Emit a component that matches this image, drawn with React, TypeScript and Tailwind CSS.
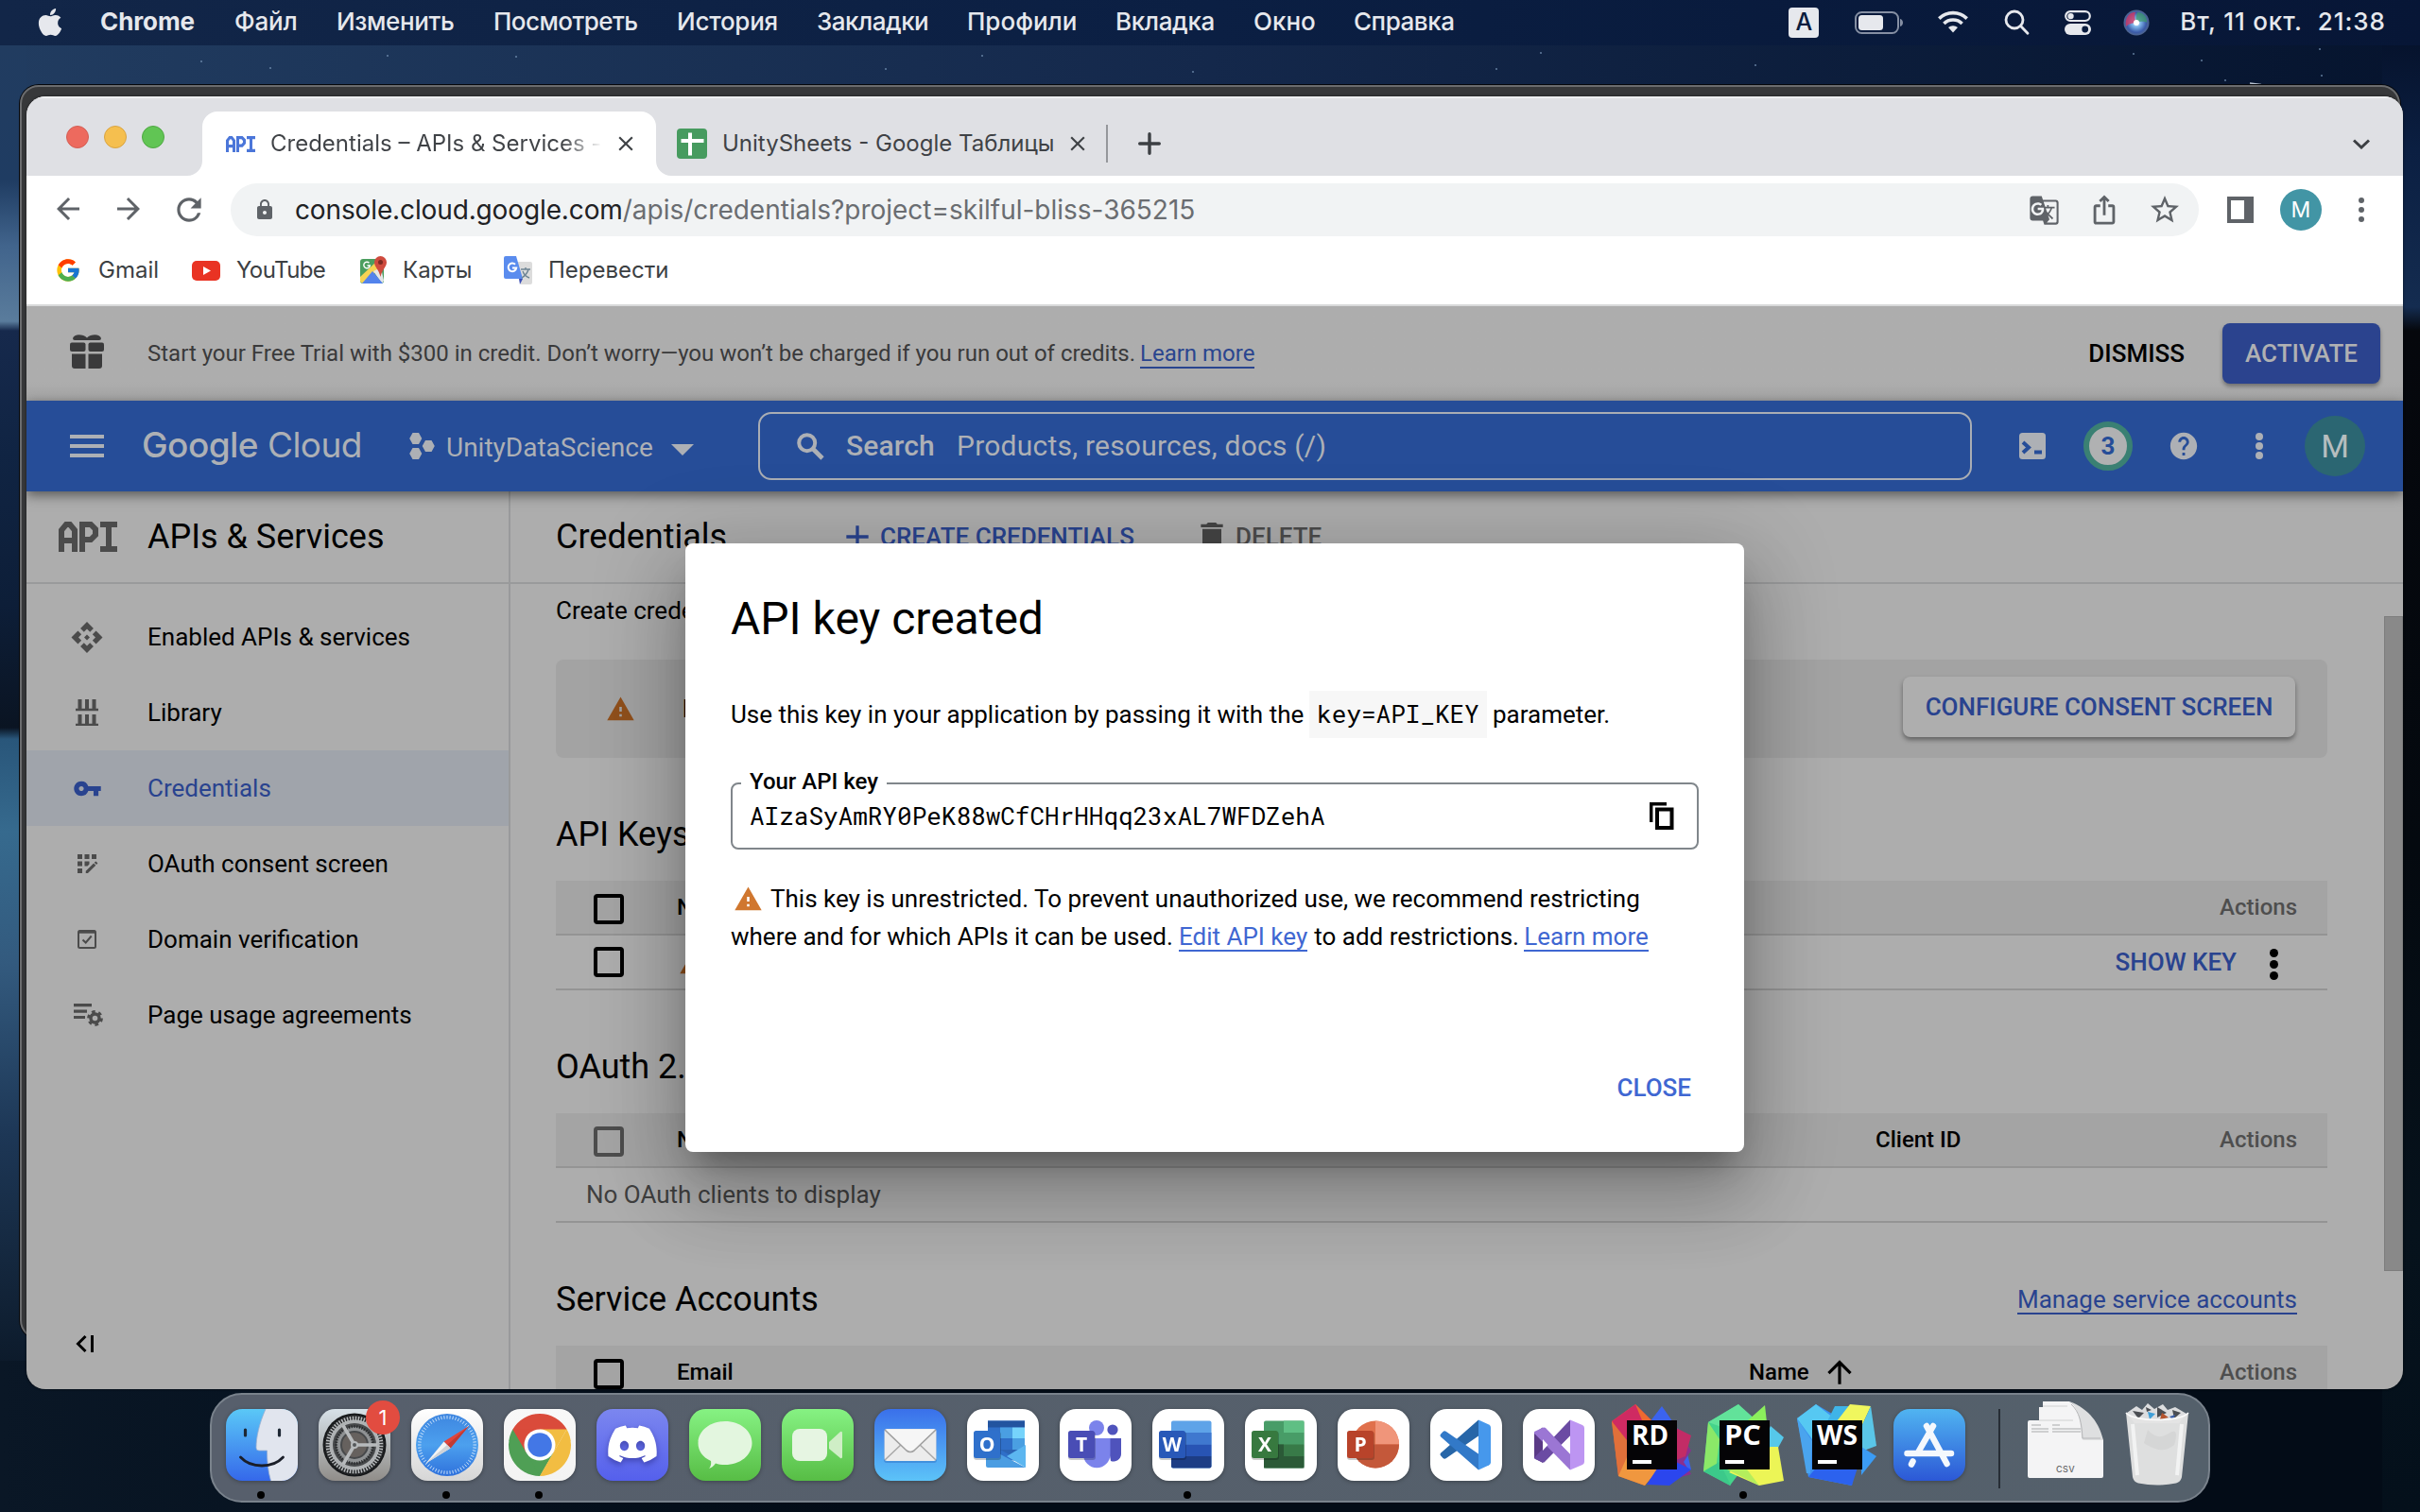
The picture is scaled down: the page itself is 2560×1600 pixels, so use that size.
import React from "react";
import {
  MdMenu, MdHelp, MdDelete, MdAdd, MdVpnKey, MdWarning, MdLock,
  MdArrowBack, MdArrowForward, MdRefresh, MdStarBorder, MdGTranslate, MdIosShare, MdArrowUpward,
  MdClose, MdApi, MdAppRegistration,
} from "react-icons/md";
import { FaApple, FaDiscord } from "react-icons/fa";
import { FcGoogle } from "react-icons/fc";

type P = { c?: string; children?: React.ReactNode };

/* A single line of text that never wraps or shrinks. */
const T = ({ c = "", children }: P) => (
  <span className={"block shrink-0 whitespace-nowrap " + c}>{children}</span>
);

const Link = ({ c = "", children }: P) => (
  <span className={"block shrink-0 whitespace-nowrap leading-[28px] shadow-[0_2px_0_currentColor] " + c}>{children}</span>
);

/* ---------- macOS menu bar ---------- */

const MENU: [string, string][] = [
  ["Chrome", "w-[142px] font-bold tracking-[-0.1px]"],
  ["Файл", "w-[108px] tracking-[-0.2px]"],
  ["Изменить", "w-[166px] tracking-[-0.35px]"],
  ["Посмотреть", "w-[194px] tracking-[-0.55px]"],
  ["История", "w-[148px] tracking-[-0.25px]"],
  ["Закладки", "w-[159px] tracking-[-0.5px]"],
  ["Профили", "w-[157px]"],
  ["Вкладка", "w-[146px] tracking-[-0.35px]"],
  ["Окно", "w-[106px]"],
  ["Справка", "w-[110px] tracking-[-0.45px]"],
];

const MenuBar = () => (
  <div className="relative flex h-12 items-center bg-linear-to-r from-[#122648] via-[#0b1f43] to-[#071636] pb-[2px] text-[26px] font-medium text-[#e6e8ed]">
    <FaApple className="ml-[38px] h-[33px] w-[30px] shrink-0" />
    <div className="mb-[2px] ml-[38px] flex">
      {MENU.map(([t, c]) => <T key={t} c={c}>{t}</T>)}
    </div>
    <div className="ml-auto flex items-center pr-[36px]">
      <span className="mt-[2px] flex h-8 w-8 items-center justify-center rounded-[4px] bg-[#e6e8ed] text-[25px] font-medium text-[#0a1c3e]">A</span>
      <svg className="ml-[38px] mt-[2px]" width="52" height="24" viewBox="0 0 52 24">
        <rect x="1" y="1" width="45" height="22" rx="6.5" fill="none" stroke="#858fa3" strokeWidth="2" />
        <rect x="4" y="4" width="26" height="16" rx="3.5" fill="#e6e8ed" />
        <path d="M48 8c4 1 4 7 0 8z" fill="#858fa3" />
      </svg>
      <svg className="ml-[36px]" width="32" height="24" viewBox="0 0 32 24" fill="none" stroke="#e6e8ed" strokeWidth="3.6">
        <path d="M1.3 8.6a21 21 0 0 1 29.4 0" />
        <path d="M6.4 14a13.6 13.6 0 0 1 19.2 0" />
        <path d="M16 23.5l-5-5.4a7.4 7.4 0 0 1 10 0z" fill="#e6e8ed" stroke="none" />
      </svg>
      <svg className="ml-[38px] mt-[2px]" width="28" height="28" viewBox="0 0 28 28" fill="none" stroke="#e6e8ed" strokeWidth="2.8" strokeLinecap="round">
        <circle cx="11" cy="11" r="9" />
        <path d="M17.8 17.8L25 25.3" />
      </svg>
      <svg className="ml-[36px] mt-[2px]" width="28" height="26" viewBox="0 0 28 26">
        <rect x="1.2" y="1.2" width="25.6" height="9.8" rx="4.9" fill="none" stroke="#e6e8ed" strokeWidth="2.2" />
        <circle cx="6.5" cy="6.1" r="3.2" fill="#e6e8ed" />
        <rect x="0" y="14" width="28" height="12" rx="6" fill="#e6e8ed" />
        <circle cx="21.7" cy="20" r="3.4" fill="#0a1c3e" />
      </svg>
      <svg className="ml-[34px] mt-[2px]" width="28" height="28" viewBox="0 0 28 28">
        <defs>
          <radialGradient id="siri" cx=".5" cy=".5" r=".55">
            <stop offset="0" stopColor="#fff" /><stop offset=".3" stopColor="#7fb4e8" /><stop offset=".7" stopColor="#3a5aa8" /><stop offset="1" stopColor="#5b6d84" />
          </radialGradient>
        </defs>
        <circle cx="14" cy="14" r="13.5" fill="url(#siri)" />
        <path d="M3 18C1 8 8 2 13 3c-2 5 0 8 1 11-4 0-8 1-11 4z" fill="#d8365f" opacity=".75" />
        <path d="M15 3c7 0 11 6 10 11-4-2-7-1-11 0-1-4 0-8 1-11z" fill="#3f9a6c" opacity=".75" />
        <circle cx="14" cy="14" r="3" fill="#fff" />
      </svg>
      <T c="ml-[32px] mb-[2px] tracking-[0.85px]">Вт, 11 окт.</T>
      <T c="ml-[16px] mb-[2px] tracking-[1px]">21:38</T>
    </div>
  </div>
);

/* ---------- Browser chrome ---------- */

const ApiMark = ({ w, h, color }: { w: number; h: number; color: string }) => (
  <svg width={w} height={h} viewBox="0 0 62 32" fill="none" stroke={color} strokeWidth="6" preserveAspectRatio="none">
    <path d="M3 32V9l5-6h4l5 6v23M3 20h14" />
    <path d="M25 32V3h9l5 5v6l-5 5h-9" />
    <path d="M44 3h18M44 29h18M53 3v26" />
  </svg>
);

const Tabs = () => (
  <div className="flex h-[84px] shrink-0 items-center border-t-2 border-[#eeeff1] bg-[#dfe0e4] pt-[14px] text-[24px] text-[#3f4246]">
    <div className="mb-[14px] ml-[42px] flex gap-4">
      <span className="size-6 rounded-full border border-[#d35f55] bg-[#ed6a5e]" />
      <span className="size-6 rounded-full border border-[#d9a442] bg-[#f5bf4f]" />
      <span className="size-6 rounded-full border border-[#4fa843] bg-[#61c554]" />
    </div>
    <div className="relative ml-[40px] flex h-[68px] w-[480px] items-center rounded-t-[16px] bg-white">
      <svg className="absolute bottom-0 -left-4" width="16" height="16"><path d="M16 0v16H0A16 16 0 0 0 16 0" fill="#fff" /></svg>
      <svg className="absolute bottom-0 -right-4" width="16" height="16"><path d="M0 0v16h16A16 16 0 0 1 0 0" fill="#fff" /></svg>
      <span className="ml-[25px]"><ApiMark w={31} h={17} color="#4b76d9" /></span>
      <div className="ml-[16px] w-[351px] overflow-hidden bg-linear-to-r from-[#3f4246] from-88% to-transparent bg-clip-text text-transparent">
        <T>Credentials – APIs &amp; Services -</T>
      </div>
      <MdClose className="ml-[12px] size-[26px] text-[#3f4246]" />
    </div>
    <svg className="ml-[22px]" width="32" height="32" viewBox="0 0 32 32">
      <rect width="32" height="32" rx="4" fill="#479b5f" />
      <path d="M14 4.500v24M4.500 13h24" stroke="#fff" strokeWidth="4" />
    </svg>
    <T c="ml-[16px] w-[353px]">UnitySheets - Google Таблицы</T>
    <MdClose className="ml-[10px] size-[26px]" />
    <span className="ml-[17px] h-10 w-[2px] bg-[#95979b]" />
    <svg className="ml-[32px]" width="24" height="24" viewBox="0 0 24 24" stroke="#3c3f43" strokeWidth="3.4" strokeLinecap="round"><path d="M12 1.700v20.600M1.700 12h20.600" /></svg>
    <svg className="ml-auto mr-[35px]" width="18" height="11" viewBox="0 0 18 11" fill="none" stroke="#3c3f43" strokeWidth="3"><path d="M1 1.500l8 7.500 8-7.500" /></svg>
  </div>
);

const Toolbar = () => (
  <div className="flex h-[72px] shrink-0 items-center bg-white text-[#5f6368]">
    <div className="ml-[26px] flex gap-7">
      <MdArrowBack className="size-9" />
      <MdArrowForward className="size-9" />
      <MdRefresh className="-mx-px size-[38px]" />
    </div>
    <div className="ml-[26px] flex h-14 w-[2082px] items-center rounded-full bg-[#f1f3f4] pr-[18px] pl-6">
      <MdLock className="size-6" />
      <div className="ml-[20px] flex text-[28px]">
        <T c="tracking-[-0.13px] text-[#202124]">console.cloud.google.com</T>
        <T c="text-[#6a6d71]">/apis/credentials?project=skilful-bliss-365215</T>
      </div>
      <div className="ml-auto flex items-center">
        <MdGTranslate className="mr-[30px] size-[33px]" />
        <MdIosShare className="mr-[29px] size-[34px]" />
        <MdStarBorder className="size-9" />
      </div>
    </div>
    <svg className="ml-[30px]" width="28" height="28"><path fillRule="evenodd" d="M0 0h28v28H0zM4 4v20h14V4z" fill="#5f6368" /></svg>
    <span className="ml-7 flex size-11 items-center justify-center rounded-full bg-[#4295a5] text-[23px] text-white">M</span>
    <div className="ml-[39px] flex flex-col gap-1">
      <i className="size-[6px] rounded-full bg-[#5f6368]" /><i className="size-[6px] rounded-full bg-[#5f6368]" /><i className="size-[6px] rounded-full bg-[#5f6368]" />
    </div>
  </div>
);

const Bookmarks = () => (
  <div className="flex h-[66px] shrink-0 items-center border-b-2 border-[#d8d9da] bg-white pb-2 text-[24px] text-[#3c4043]">
    <FcGoogle className="ml-[30px] size-[28px]" />
    <T c="ml-[18px] w-[65px]">Gmail</T>
    <svg className="ml-[34px]" width="30" height="21" viewBox="0 0 30 21"><rect width="30" height="21" rx="5" fill="#e93323" /><path d="M12 6l8 4.500-8 4.500z" fill="#fff" /></svg>
    <T c="ml-[17px] w-[94px] tracking-[-0.6px]">YouTube</T>
    <svg className="ml-[37px]" width="28" height="30" viewBox="0 0 28 30">
      <rect y="3" width="25" height="26" rx="3" fill="#4b9e5f" />
      <path d="M0 22L17 6l5 6L3 29l-3-2z" fill="#f6d353" />
      <path d="M14 16l8-4 3 14-2 3z" fill="#e4e6e8" />
      <path d="M13 16l11 13H2z" fill="#5383ec" />
      <path d="M21.500 0a6.500 6.500 0 0 1 6.500 6.500c0 5-5 8-6.500 15.500C20 14.500 15 11.500 15 6.500A6.500 6.500 0 0 1 21.500 0z" fill="#cf4b3e" />
      <circle cx="21.500" cy="6.500" r="2.500" fill="#7d2a22" />
      <path d="M9.500 7.200a3.300 3.300 0 1 0 .9 2.800H7.500" fill="none" stroke="#fff" strokeWidth="1.400" />
    </svg>
    <T c="ml-[17px] w-[74px]">Карты</T>
    <svg className="ml-[33px]" width="30" height="30" viewBox="0 0 30 30">
      <path d="M12 6h16a2 2 0 0 1 2 2v20a2 2 0 0 1-2 2H18z" fill="#dcdcdc" />
      <path d="M2 0h11l7 24H2a2 2 0 0 1-2-2V2a2 2 0 0 1 2-2z" fill="#5a8cee" />
      <path d="M16 24h4l-3 6z" fill="#3d50b5" />
      <path d="M12 8.800a4.300 4.300 0 1 0 1.200 3.700H9" fill="none" stroke="#fff" strokeWidth="2" />
      <path d="M18 14h10M23 12v2M26 14c-1 4-4 7-7 9M20 16c1 3 4 6 7 7" fill="none" stroke="#6d8493" strokeWidth="1.400" />
    </svg>
    <T c="ml-[17px]">Перевести</T>
  </div>
);

/* ---------- Cloud console ---------- */

const Banner = () => (
  <div className="flex h-[100px] shrink-0 items-center bg-linear-to-b from-[#adadad] from-80% to-[#a5a5a5] text-[24px] text-[#3a3a3b]">
    <svg className="-mt-1 ml-[46px]" width="36" height="36" viewBox="0 0 36 36" fill="#3a3a3b">
      <rect x="0" y="8.500" width="16.500" height="9.500" rx="2" /><rect x="19.500" y="8.500" width="16.500" height="9.500" rx="2" />
      <path d="M2 20.500h14.500V36H5q-3 0-3-3zM19.500 20.500H34V33q0 3-3 3H19.500z" />
      <path d="M18 3.500C14-1 4-1 3 4q0 2 2 2h26q2 0 2-2C32-1 22-1 18 3.500z" />
    </svg>
    <T c="ml-[46px] w-[1044px]">Start your Free Trial with $300 in credit. Don’t worry—you won’t be charged if you run out of credits.</T>
    <Link c="ml-[6px] text-[#2a458f]">Learn more</Link>
    <T c="ml-auto mr-10 text-[26px] font-medium text-black">DISMISS</T>
    <span className="mr-6 flex h-16 w-[167px] items-center justify-center rounded-[8px] bg-[#2b438e] text-[26px] font-medium text-[#b0b1b3] shadow-[0_3px_4px_rgba(0,0,0,0.35)]">ACTIVATE</span>
  </div>
);

const Header = () => (
  <div className="relative z-10 flex h-24 shrink-0 items-center bg-[#264d98] text-[28px] text-[#adb0b5] shadow-[0_4px_12px_rgba(0,0,0,0.5)]">
    <MdMenu className="ml-10 size-12 shrink-0" />
    <T c="ml-[34px] mb-[3px] w-[232px] font-['Inter'] text-[37px] tracking-[-0.55px]"><span className="font-medium">Google</span> Cloud</T>
    <svg className="ml-[51px]" width="27" height="28" viewBox="0 0 27 28" fill="#adb0b5">
      <path d="M3.500 0h6.500l3.300 6-3.300 6H3.500L.2 6zM17 8h6.500l3.300 6-3.300 6H17l-3.300-6zM3.500 16h6.500l3.300 6-3.300 6H3.500L.2 22z" />
    </svg>
    <T c="ml-[12px] mt-[3px] w-[220px]">UnityDataScience</T>
    <svg className="ml-[18px] mt-[7px]" width="24" height="12"><path d="M0 0h24L12 12z" fill="#adb0b5" /></svg>
    <div className="ml-[68px] flex h-[72px] w-[1284px] items-center rounded-[14px] border-2 border-[#a9adb4] pl-[39px] text-[30px]">
      <svg width="29" height="29" viewBox="0 0 29 29" fill="none" stroke="#adb0b5" strokeWidth="4"><circle cx="10.700" cy="10.700" r="8.500" /><path d="M17 17l10 10" strokeWidth="4.600" /></svg>
      <T c="ml-[23px] w-[94px] font-medium tracking-[0.1px]">Search</T>
      <T c="ml-[23px] tracking-[0.22px]">Products, resources, docs (/)</T>
    </div>
    <svg className="ml-[50px]" width="28" height="28" viewBox="0 0 28 28">
      <rect width="28" height="28" rx="3.500" fill="#adb0b5" />
      <path d="M4 10l6 5.500L4 21" fill="none" stroke="#264d98" strokeWidth="4" /><path d="M16 18.500h8v4h-8z" fill="#264d98" />
    </svg>
    <span className="ml-10 flex size-[52px] items-center justify-center rounded-full border-6 border-[#3a8073] bg-[#b0b1b2] text-[26px] font-bold text-[#264d98]">3</span>
    <MdHelp className="ml-[37px] size-[34px]" />
    <div className="ml-[59px] flex flex-col gap-[2px]">
      <i className="size-2 rounded-full bg-[#adb0b5]" /><i className="size-2 rounded-full bg-[#adb0b5]" /><i className="size-2 rounded-full bg-[#adb0b5]" />
    </div>
    <span className="ml-[44px] flex size-16 items-center justify-center rounded-full bg-[#2b6672] text-[34px] text-[#b6bdbf]">M</span>
  </div>
);

const NAV: [string, React.ReactNode][] = [
  ["Enabled APIs & services", <MdApi className="size-[37px]" />],
  ["Library", (
    <svg width="24" height="28" viewBox="0 0 24 28" stroke="#4b4b4b" fill="none"><path d="M4.500 0v10M12 0v10M19.500 0v10M4.500 16v10M12 16v10M19.500 16v10" strokeWidth="4" /><path d="M0 11h24M0 27h24" strokeWidth="2.400" /></svg>
  )],
  ["Credentials", <MdVpnKey className="size-[31px]" />],
  ["OAuth consent screen", <MdAppRegistration className="size-[30px]" />],
  ["Domain verification", (
    <svg width="20" height="20" viewBox="0 0 20 20" fill="none" stroke="#4b4b4b"><rect x="1" y="1" width="18" height="18" rx="1.500" strokeWidth="2" /><path d="M1 2.200h18" strokeWidth="3" /><path d="M5.500 10.500l3.200 3 6-7" strokeWidth="2" /></svg>
  )],
  ["Page usage agreements", (
    <svg className="ml-[2px]" width="31" height="24" viewBox="0 0 31 24" fill="none" stroke="#4b4b4b"><path d="M0 1.600h19M0 8.100h14M0 14.500h12" strokeWidth="3.200" /><circle cx="22.500" cy="15.500" r="4.500" strokeWidth="3.400" /><circle cx="22.500" cy="15.500" r="7" strokeWidth="2.800" strokeDasharray="3.660 3.660" /></svg>
  )],
];

const Sidebar = () => (
  <div className="flex w-[512px] shrink-0 flex-col border-r-2 border-[#999a9b]">
    <div className="flex h-[98px] shrink-0 items-center border-b-2 border-[#999a9b] pl-[34px]">
      <ApiMark w={62} h={32} color="#4b4b4b" />
      <T c="ml-8 text-[36px]">APIs &amp; Services</T>
    </div>
    <div className="pt-4">
      {NAV.map(([t, icon]) => (
        <div key={t} className={"flex h-20 items-center pl-[46px] " + (t === "Credentials" ? "bg-[#a0a4ab] text-[#29438f]" : "")}>
          <span className={"flex w-9 shrink-0 justify-center " + (t === "Credentials" ? "" : "text-[#4b4b4b]")}>{icon}</span>
          <T c="ml-[46px]">{t}</T>
        </div>
      ))}
    </div>
    <svg className="mt-auto mb-[38px] ml-[52px] shrink-0" width="19" height="20" viewBox="0 0 19 20" fill="none" stroke="#000" strokeWidth="3"><path d="M10.500 2L2.500 10l8 8M17.500 1v18" /></svg>
  </div>
);

const Check = ({ c = "border-black" }: P) => <span className={"size-8 shrink-0 rounded-[4px] border-4 " + c} />;
const ROW = "flex h-[58px] shrink-0 items-center border-b-2 border-[#949494] pl-10 pr-8 ";
const HEAD = ROW + "bg-[#a4a4a4] text-[24px] font-medium";
const Actions = () => <T c="ml-auto text-[#4e4e4e]">Actions</T>;

const Main = () => (
  <div className="flex flex-1 flex-col overflow-hidden">
    <div className="flex h-[98px] shrink-0 items-center border-b-2 border-[#999a9b] pl-12">
      <T c="w-[180px] text-[36px]">Credentials</T>
      <MdAdd className="ml-[119px] size-10 text-[#29438f]" />
      <T c="ml-1 w-[271px] font-medium text-[#29438f]">CREATE CREDENTIALS</T>
      <MdDelete className="ml-[60px] size-10 text-[#454545]" />
      <T c="ml-[5px] font-medium text-[#4c4c4c]">DELETE</T>
    </div>
    <div className="flex flex-1 overflow-hidden">
      <div className="ml-12 flex w-[1874px] flex-col">
        <T c="mt-7 h-0 leading-[0px]">Create crede</T>
        <div className="mt-[52px] flex h-[104px] shrink-0 items-center rounded-[8px] bg-[#a3a3a3] pl-[53px]">
          <MdWarning className="size-[31px] text-[#90501c]" />
          <T c="ml-[50px] font-medium">R</T>
          <span className="mr-[34px] mb-1 ml-auto flex h-16 w-[415px] items-center justify-center rounded-[8px] bg-[#aeaeae] font-medium text-[#29438f] shadow-[0_3px_5px_rgba(0,0,0,0.4)]">CONFIGURE CONSENT SCREEN</span>
        </div>
        <div className="flex h-[130px] shrink-0 items-center pt-8 text-[36px]">API Keys</div>
        <div className={HEAD}>
          <Check c="mt-1 border-black" />
          <T c="ml-[56px]">N</T>
          <Actions />
        </div>
        <div className={ROW}>
          <Check />
          <MdWarning className="ml-[58px] size-[31px] text-[#90501c]" />
          <T c="ml-auto font-medium text-[#29438f]">SHOW KEY</T>
          <div className="mr-[20px] ml-[35px] mt-1 flex flex-col gap-[3px]">
            <i className="size-[9px] rounded-full bg-black" /><i className="size-[9px] rounded-full bg-black" /><i className="size-[9px] rounded-full bg-black" />
          </div>
        </div>
        <div className="flex h-[130px] shrink-0 items-center pt-8 text-[36px]">OAuth 2.</div>
        <div className={HEAD}>
          <Check c="mt-1 border-[#4d4d4d]" />
          <T c="ml-[56px] w-[1268px]">N</T>
          <T>Client ID</T>
          <Actions />
        </div>
        <div className="flex h-[58px] shrink-0 items-center border-b-2 border-[#949494] pl-8 text-[#3f3f3f]">No OAuth clients to display</div>
        <div className="flex h-[130px] shrink-0 items-center justify-between pt-8 pr-8">
          <T c="text-[36px]">Service Accounts</T>
          <Link c="text-[#29438f]">Manage service accounts</Link>
        </div>
        <div className={HEAD}>
          <Check c="mt-1 border-black" />
          <T c="ml-[56px] w-[1134px]">Email</T>
          <T>Name</T>
          <MdArrowUpward className="ml-[13px] size-[38px]" />
          <Actions />
        </div>
      </div>
      <div className="mt-[34px] ml-auto h-[693px] w-[20px] border border-[#7d7d7d] bg-[#898989]" />
    </div>
  </div>
);

const Modal = () => (
  <div className="absolute top-[473px] left-[697px] z-20 flex h-[644px] w-[1120px] flex-col rounded-[8px] bg-white px-12 pt-12 shadow-[0_22px_30px_-14px_rgba(0,0,0,0.3),0_48px_76px_6px_rgba(0,0,0,0.16),0_18px_92px_16px_rgba(0,0,0,0.16)]">
    <T c="h-16 text-[48px] leading-[64px]">API key created</T>
    <div className="mt-[19px] flex h-[100px] items-center">
      <T c="w-[606px]">Use this key in your application by passing it with the</T>
      <span className="ml-[6px] flex h-[50px] w-[188px] items-center justify-center bg-[#f7f7f7] pb-[2px] font-['Roboto_Mono','DejaVu_Sans_Mono',monospace]">key=API_KEY</span>
      <T c="ml-[6px]">parameter.</T>
    </div>
    <div className="relative mt-[22px] flex h-[71px] w-[1024px] shrink-0 items-center rounded-[8px] border-2 border-[#80868b] pr-[22px] pb-[1px] pl-[18px]">
      <span className="absolute -top-[18px] left-[9px] bg-white px-[9px] text-[24px] leading-[30px] font-medium">Your API key</span>
      <T c="font-['Roboto_Mono','DejaVu_Sans_Mono',monospace]">AIzaSyAmRY0PeK88wCfCHrHHqq23xAL7WFDZehA</T>
      <svg className="mr-[2px] ml-auto" width="26" height="29" viewBox="0 0 26 29" fill="none" stroke="#000" strokeWidth="3.4"><path d="M1.700 21V1.700H18" /><rect x="8" y="7.500" width="15.500" height="19.500" strokeWidth="4" /></svg>
    </div>
    <div className="mt-[32px] flex h-10 items-center">
      <MdWarning className="ml-[3px] size-[31px] text-[#d0772f]" />
      <T c="ml-[8px]">This key is unrestricted. To prevent unauthorized use, we recommend restricting</T>
    </div>
    <div className="flex h-10 items-center">
      <T c="w-[468px]">where and for which APIs it can be used.</T>
      <Link c="ml-[6px] text-[#3f67d2]">Edit API key</Link>
      <T c="ml-[7px] w-[217px]">to add restrictions.</T>
      <Link c="ml-[5px] text-[#3f67d2]">Learn more</Link>
    </div>
    <T c="mt-[114px] mr-2 self-end leading-[52px] font-medium text-[#3f67d2]">CLOSE</T>
  </div>
);

/* ---------- Dock ---------- */

const Tile = ({ from, to, children }: { from: string; to: string; children?: React.ReactNode }) => {
  const id = React.useId();
  return (
    <svg className="overflow-visible drop-shadow-[0_1px_2px_rgba(0,0,0,0.3)]" width="76" height="76" viewBox="0 0 76 76">
      <defs><linearGradient id={id} x2="0" y2="1"><stop stopColor={from} /><stop offset="1" stopColor={to} /></linearGradient></defs>
      <rect width="76" height="76" rx="17.500" fill={`url(#${id})`} />
      {children}
    </svg>
  );
};

const Letter = ({ x, y, s, children, c = "#fff" }: { x: number; y: number; s: number; children: string; c?: string }) => (
  <text x={x} y={y} fontFamily="Open Sans, sans-serif" fontWeight="700" fontSize={s} fill={c} textAnchor="middle">{children}</text>
);

const Plate = ({ color, children }: { color: string; children: string }) => (
  <>
    <rect x="7" y="24" width="29" height="30" rx="3" fill="#000" opacity=".2" />
    <rect x="7" y="23" width="28" height="29" rx="2.500" fill={color} />
    <Letter x={21} y={45} s={21}>{children}</Letter>
  </>
);

const Ticks = ({ r1, r2, n, c, w }: { r1: number; r2: number; n: number; c: string; w: number }) => (
  <g stroke={c} strokeWidth={w}>
    {Array.from({ length: n }, (_, i) => {
      const a = (i * 2 * Math.PI) / n;
      return <path key={i} d={`M${38 + r1 * Math.cos(a)} ${38 + r1 * Math.sin(a)}L${38 + r2 * Math.cos(a)} ${38 + r2 * Math.sin(a)}`} />;
    })}
  </g>
);

const Jet = ({ label, children }: { label: string; children: React.ReactNode }) => (
  <svg className="overflow-visible" width="76" height="76" viewBox="0 0 76 76">
    {children}
    <rect x="12" y="12" width="53" height="52" fill="#050406" />
    <text x="17" y="38" fontFamily="Open Sans, sans-serif" fontWeight="700" fontSize="28" fill="#fff" textLength={label === "WS" ? 43 : 39} lengthAdjust="spacingAndGlyphs">{label}</text>
    <rect x="18" y="54" width="20" height="4" fill="#fff" />
  </svg>
);

const Finder = () => (
  <Tile from="#5ac8f7" to="#3568ea">
    <path d="M42 0C35 16 32 30 32 41q0 3 3 3h8.500c0 11 1 22 4 32H58.500A17.500 17.500 0 0 0 76 58.500v-41A17.500 17.500 0 0 0 58.500 0z" fill="#e1e5ee" />
    <path d="M42 0C35 16 32 30 32 41q0 3 3 3h8.500c0 11 1 22 4 32" fill="none" stroke="#9bb0d0" strokeWidth=".8" />
    <path d="M20.500 22v6M56.500 22v6" stroke="#1d2733" strokeWidth="3.200" strokeLinecap="round" />
    <path d="M15.500 51c11 12 34 12 45 0" fill="none" stroke="#1a1e28" strokeWidth="2.800" strokeLinecap="round" />
  </Tile>
);

const Settings = () => (
  <div className="relative">
    <Tile from="#d7e1e8" to="#908d89">
      <circle cx="38" cy="38" r="33.500" fill="#17191b" />
      <circle cx="38" cy="38" r="30.500" fill="#b9bcbe" />
      <Ticks r1={26.500} r2={32} n={60} c="#26282a" w={1.500} />
      <circle cx="38" cy="38" r="26" fill="#aeb1b3" />
      <circle cx="38" cy="38" r="23" fill="#47494b" />
      <circle cx="38" cy="38" r="17" fill="none" stroke="#8f9294" strokeWidth="4" />
      <Ticks r1={18} r2={21} n={44} c="#26282a" w={1.200} />
      <circle cx="38" cy="38" r="13" fill="#66615e" />
      <path d="M38 38h24M38 38L26 17.500M38 38L26 58.500" stroke="#b7babc" strokeWidth="3.600" />
      <circle cx="38" cy="38" r="4" fill="#b7babc" /><circle cx="38" cy="38" r="2" fill="#55585a" />
    </Tile>
    <span className="absolute -top-[9px] left-[50px] flex size-9 items-center justify-center rounded-full bg-[#e24c40] text-[22px] text-white">1</span>
  </div>
);

const Safari = () => (
  <Tile from="#ffffff" to="#d6d6d6">
    <defs><linearGradient id="saf" x2="0" y2="1"><stop stopColor="#3e86e0" /><stop offset=".5" stopColor="#4ca0ee" /><stop offset="1" stopColor="#2f71dc" /></linearGradient></defs>
    <circle cx="38" cy="38" r="33" fill="url(#saf)" />
    <Ticks r1={27.500} r2={31} n={60} c="#d8eafc" w={0.900} />
    <path d="M61 18L34.500 34.500l7 7z" fill="#e0453c" />
    <path d="M61 18L41.500 41.500 38 38z" fill="#c03a33" />
    <path d="M15.500 57.500L34.500 34.500l7 7z" fill="#f4f4f4" />
    <path d="M15.500 57.500L41.500 41.500 38 38z" fill="#cfd3d8" />
  </Tile>
);

const Chrome = () => (
  <Tile from="#f8f8f8" to="#f3f3f3">
    <path d="M38 38L9.400 21.500A33 33 0 0 1 66.600 21.500z" fill="#da4b3b" />
    <path d="M38 38L9.400 21.500A33 33 0 0 0 38 71l14.300-24.700z" fill="#4f9f55" />
    <path d="M38 21.500h28.600L52.300 46.300z" fill="#f2bd42" />
    <path d="M9.400 21.500L23.700 46.300 38 21.500z" fill="#da4b3b" />
    <path d="M23.700 46.300L38 71l14.300-24.700z" fill="#4f9f55" />
    <path d="M52.300 46.300L38 71a33 33 0 0 0 28.600-49.500z" fill="#f2bd42" />
    <circle cx="38" cy="38" r="16.500" fill="#fff" /><circle cx="38" cy="38" r="12.800" fill="#4377e6" />
  </Tile>
);

const Outlook = () => (
  <Tile from="#ffffff" to="#ffffff">
    <rect x="22" y="12.500" width="39" height="42" fill="#2f6fc8" /><rect x="22" y="12.500" width="39" height="7" fill="#22549f" />
    <rect x="35" y="19.500" width="13" height="11.500" fill="#4a9fe2" /><rect x="48" y="19.500" width="13" height="11.500" fill="#76d3fb" />
    <rect x="48" y="31" width="13" height="12" fill="#4a9fe2" /><path d="M35 43h26L48 50z" fill="#2c64b4" />
    <path d="M20 40l42 22H22q-2 0-2-2z" fill="#4b9de2" /><path d="M62 38v24L42 50z" fill="#5cb6f0" />
    <Plate color="#2f70cb">O</Plate>
  </Tile>
);

const Teams = () => (
  <Tile from="#ffffff" to="#ffffff">
    <circle cx="56" cy="22" r="5.600" fill="#4f53bc" /><path d="M50 31h15v17a8 8 0 0 1-11 7z" fill="#4f53bc" />
    <circle cx="39" cy="20" r="8" fill="#7b83eb" /><path d="M25 31h28.500v17a14 14 0 0 1-28.500 0z" fill="#7b83eb" />
    <g transform="translate(2 0)"><Plate color="#494db5">T</Plate></g>
  </Tile>
);

const Word = () => (
  <Tile from="#ffffff" to="#ffffff">
    <rect x="20" y="12.500" width="42.500" height="50" rx="2" fill="#5ea3e8" /><rect x="20" y="25" width="42.500" height="12.500" fill="#3f78cf" />
    <rect x="20" y="37.500" width="42.500" height="12.500" fill="#2854b4" /><path d="M20 50h42.500v10.500q0 2-2 2H22q-2 0-2-2z" fill="#1d3d85" />
    <Plate color="#2858b8">W</Plate>
  </Tile>
);

const Excel = () => (
  <Tile from="#ffffff" to="#ffffff">
    <rect x="20" y="12.500" width="42.500" height="50" rx="2" fill="#489c67" /><path d="M41 12.500h21.500V25H41z" fill="#5fbf84" /><path d="M41 25h21.500v12.500H41z" fill="#489c67" />
    <path d="M20 37.500h42.500V50H20z" fill="#387a48" /><path d="M20 37.500h21V62.500H20zM41 50h21.500v12.500H41z" fill="#2b5a37" />
    <Plate color="#37793f">X</Plate>
  </Tile>
);

const PowerPoint = () => (
  <Tile from="#ffffff" to="#ffffff">
    <circle cx="40" cy="37.500" r="25" fill="#e0704c" /><path d="M40 12.500a25 25 0 0 1 25 25H40z" fill="#f0957a" /><path d="M15 37.500h50a25 25 0 0 1-50 0z" fill="#c4583a" />
    <g transform="translate(3 0)"><Plate color="#b8432a">P</Plate></g>
  </Tile>
);

const VSCode = () => (
  <Tile from="#ffffff" to="#ffffff">
    <path d="M51 11.500v17L17 52q-2 1.500-3.500 0l-2.300-2.500q-1.400-1.500 0-3z" fill="#2766a8" />
    <path d="M51 64.500v-17L17 24q-2-1.500-3.500 0l-2.300 2.500q-1.400 1.500 0 3z" fill="#3279c8" />
    <path d="M51 11.500L62 16.500q2 1 2 3v37q0 2-2 3L51 64.500z" fill="#4698ec" />
  </Tile>
);

const VisualStudio = () => (
  <Tile from="#ffffff" to="#ffffff">
    <path d="M12 25.500l9-6V57l-9-5z" fill="#5a3a86" />
    <path d="M50 11.500v17L23 56q-1 1-2 .5l-8-3.500q-1.500-1 0-2.500z" fill="#6b4ba3" />
    <path d="M50 64.500v-17L24 20q-1-1-3-.3l-8.500 4q-1.200 1 0 2.500z" fill="#9b76d4" />
    <path d="M50 11.500L63 17q2 1 2 3v36q0 2-2 3l-13 5.500z" fill="#bd95f2" />
    <path d="M50 28.500v19L40.500 38zM21 32v12l5.500-6z" fill="#fff" />
  </Tile>
);

const AppStore = () => (
  <Tile from="#50b4f1" to="#2c58d6">
    <g stroke="#f4f8fd" strokeWidth="6.500" strokeLinecap="round">
      <path d="M35 18L56.500 58M42 18L26 46M14.500 47H61M20.500 55.500l-1.500 3" />
    </g>
  </Tile>
);

const Csv = () => (
  <svg width="80" height="82" viewBox="0 0 80 82">
    <path d="M8 24h6v6H8z" fill="#3a62b5" />
    <path d="M12 6h4V0h28q8 4 12 18l24 23v38q0 2-2 2H2q-2 0-2-2V22q0-2 2-2h10z" fill="#f4f4f5" />
    <path d="M16 5h26M12 20h36" stroke="#d0d1d2" strokeWidth="1" />
    <path d="M44 0c10 6 12 20 13 38q0 3 3 3h20C76 24 66 8 44 0z" fill="#dedfe0" />
    <path d="M46 3c9 8 11 20 12 36h19" fill="none" stroke="#b4b5b7" strokeWidth="1" />
    <path d="M4 25h10M4 29h18M4 32h18M26 25h8M26 29h30M26 32h30" stroke="#a8a9ab" strokeWidth="1.200" />
    <text x="40" y="75" fontFamily="Inter, sans-serif" fontSize="9" fontWeight="500" fill="#68696b" textAnchor="middle" letterSpacing=".4">CSV</text>
  </svg>
);

const Trash = () => (
  <svg width="68" height="90" viewBox="0 0 68 90">
    <path d="M2 12L12 5l6 4 6-7 7 6 9-5 5 6 8-3 12 7-8 10H10z" fill="#dcdddf" />
    <path d="M8 10l12 2-6 6zM34 6l10 6-10 5zM50 9l9 3-7 6zM22 6l6 3-5 2z" fill="#4b4e53" /><path d="M24 11l8 2-6 6z" fill="#3f9fd8" /><path d="M39 12l7 5-9 2z" fill="#b5542e" /><path d="M47 16l6-2-2 6z" fill="#3c5fa8" />
    <path d="M1 12c8 10 58 10 66 0l-7 68q-1 5-6 6.500-20 4-40 0-5-1.500-6-6.500z" fill="#e4e4e4" opacity=".96" />
    <path d="M1 12c8 10 58 10 66 0" fill="none" stroke="#fafafa" strokeWidth="1.600" />
    <path d="M8 24l5 54M60 24l-5 54" stroke="#f8f8f8" strokeWidth="4" opacity=".8" />
    <path d="M24 30q10 12 22 4t6 12q-10 8-20 4T20 44z" fill="#d2d2d1" opacity=".7" />
  </svg>
);

const DOCK: React.ReactNode[] = [
  <Finder />, <Settings />, <Safari />, <Chrome />,
  <div className="relative"><Tile from="#7b86ef" to="#5560ec" /><FaDiscord className="absolute top-[9px] left-[10px] size-[56px] text-white drop-shadow-[0_3px_3px_rgba(30,30,120,0.5)]" /></div>,
  <Tile from="#86f283" to="#57bd45">
    <path d="M38 13c16 0 28.500 10 28.500 23S54 59 38 59c-4 0-7-.500-10-1.500-2 3-5 5-7 5.500 2-2 2.500-5 2-8C14 51 9.500 44 9.500 36 9.500 23 22 13 38 13z" fill="#e3f6df" />
  </Tile>,
  <Tile from="#86f283" to="#57bd45">
    <rect x="11" y="21" width="37" height="34" rx="8" fill="#e6f5e2" /><path d="M50 35l12-11q2-1 2 1.500v25q0 2.500-2 1.500L50 42z" fill="#cfeec6" />
  </Tile>,
  <Tile from="#3a70ea" to="#5cc3f8">
    <rect x="10" y="23" width="56" height="34" rx="3" fill="#174fa8" opacity=".3" />
    <rect x="10.500" y="21" width="55" height="34" rx="3" fill="#ececec" /><path d="M11 54l19-18M65 54L46 36" stroke="#a9a9a9" strokeWidth="1.500" />
    <path d="M11 22l23 22q4 3 8 0l23-22" fill="#f6f6f6" stroke="#a0a0a0" strokeWidth="1.600" />
  </Tile>,
  <Outlook />, <Teams />, <Word />, <Excel />, <PowerPoint />, <VSCode />, <VisualStudio />,
  <Jet label="RD">
    <path d="M21-5L-4 13l7 58 28 10L46 40z" fill="#e2662f" /><path d="M21-5L-4 13l16 22L40 14z" fill="#cf2a62" /><path d="M-4 13l16 20v36l-9 2z" fill="#e0703a" />
    <path d="M49-3L36 14l20 60 24-10-8-34z" fill="#3b63ee" /><path d="M64 20l16 24-8 12 8 13-22 6z" fill="#8b2f8e" /><path d="M64 20l16 8-6 22-10 4z" fill="#c22c66" />
    <path d="M21-5l19 19-12-2z" fill="#ee6a30" />
    <path d="M3 71l9-20 34 12L31 81z" fill="#f0973f" /><path d="M46 60L33 80l24 1 23-17-16-8z" fill="#2b46ee" />
  </Jet>,
  <Jet label="PC">
    <path d="M32-5L0 14l-5 52 28 15 30-40z" fill="#45d38c" /><path d="M0 14L32-5l20 18-38 6z" fill="#62e29a" /><path d="M0 14l12 18-4 34-13 0z" fill="#8be868" />
    <path d="M60-4L42 12l22 20z" fill="#8bef5c" /><path d="M66 18l14 12-12 22-8-20z" fill="#56c8ea" />
    <path d="M66 40l8 0 6 36-26 5-32-14 20-14z" fill="#ecf556" /><path d="M20 64l18-4 16 21z" fill="#b4ee5c" /><path d="M-5 66l17-10 12 25z" fill="#3cc98a" />
  </Jet>,
  <Jet label="WS">
    <path d="M16-5L-4 10l12 62 46 9 6-60z" fill="#3a8ff0" /><path d="M16-5L-4 10l16 22 26-20z" fill="#56c8f2" /><path d="M36-3l-8 16 20 4 4-20z" fill="#3fb4e8" />
    <path d="M52-5L38 13l26 6 10-22z" fill="#f0f75e" /><path d="M74-3l6 42-16 6 0-26z" fill="#5ac6e8" /><path d="M64 40l16 10-16 20z" fill="#3b9cf5" />
    <path d="M8 72l10-12 42 2-6 19z" fill="#2c62ee" /><path d="M-4 10l16 24-2 34-4 0z" fill="#4aa4ee" />
  </Jet>,
  <AppStore />,
];

const RUNNING = [0, 2, 3, 10, 16];

const Dock = () => (
  <div className="absolute top-[1474px] left-[222px] z-30 flex h-[116px] w-[2116px] rounded-[34px] border-2 border-[#79828c] bg-linear-to-r from-[#575f6c] to-[#54606b] pt-[15px] pl-[15px]">
    <div className="flex gap-[22px]">
      {DOCK.map((icon, i) => (
        <div key={i} className="flex w-[76px] flex-col items-center">
          <div className="h-[76px]">{icon}</div>
          {RUNNING.includes(i) && <span className="mt-[11px] mr-[2px] size-2 rounded-full bg-black" />}
        </div>
      ))}
    </div>
    <span className="ml-[35px] h-[84px] w-[2px] bg-[#262d35]" />
    <div className="-mt-[8px] ml-[29px]"><Csv /></div>
    <div className="-mt-[8px] ml-[23px]"><Trash /></div>
  </div>
);

const STARS = [[213, 65], [410, 59], [286, 72], [546, 60], [937, 73], [1039, 59], [1262, 76], [1630, 56], [1583, 73], [1857, 69], [2257, 57], [2329, 64], [2354, 85], [2454, 52], [2456, 80]];

export default function App() {
  return (
    <div className="relative h-[1600px] w-[2560px] overflow-hidden bg-[#030c17] font-['Inter',sans-serif]">
      {/* Wallpaper: sky along the top, sea on the left, cliffs on the right */}
      <div className="absolute inset-x-0 top-0 h-[340px] bg-linear-to-r from-[#213c60] via-[#14284b] to-[#06142e]" />
      <svg className="absolute top-0 left-0" width="2560" height="90" fill="#7f9dbd">
        {STARS.map(([x, y]) => <circle key={x} cx={x} cy={y} r="1.1" opacity=".7" />)}
        <path d="M2380 88l12 1.500" stroke="#b9c4d2" strokeWidth="1.500" />
      </svg>
      <div className="absolute top-12 left-0 h-[1422px] w-[28px] bg-[linear-gradient(to_bottom,#213c60_0px,#1f3c62_142px,#41648c_212px,#5a7c9c_292px,#16294c_302px,#102443_432px,#0d1e38_592px,#0a1422_722px,#29567a_734px,#366a8e_832px,#335a7e_972px,#1d3756_1152px,#112236_1332px,#0a1726_1422px)]" />
      <div className="absolute top-[1440px] left-0 h-[160px] w-[900px] bg-linear-to-r from-[#0a1726] to-[#030c17]" />
      <div className="absolute top-12 right-0 h-full w-10 bg-[linear-gradient(to_bottom,#06132d_0px,#0b1f42_112px,#142c50_277px,#05070c_302px,#04090f_852px,#06121c_1252px,#04101b_1552px)]" />
      <MenuBar />
      {/* Window behind the browser */}
      <div className="absolute top-[90px] left-[21px] h-[1327px] w-[2518px] rounded-[20px] border-2 border-[#6b6c6e] bg-[#37383a] shadow-[0_0_0_1px_#05070b]" />
      {/* Browser window */}
      <div className="absolute top-[102px] left-[28px] flex h-[1368px] w-[2514px] flex-col overflow-hidden rounded-[20px] bg-[#adadad] shadow-[0_0_3px_rgba(0,0,0,0.6)]">
        <Tabs />
        <Toolbar />
        <Bookmarks />
        <div className="flex flex-1 flex-col overflow-hidden font-['Roboto',sans-serif] text-[26px] leading-none text-black">
          <Banner />
          <Header />
          <div className="flex flex-1 overflow-hidden">
            <Sidebar />
            <Main />
          </div>
          <Modal />
        </div>
      </div>
      <Dock />
    </div>
  );
}
